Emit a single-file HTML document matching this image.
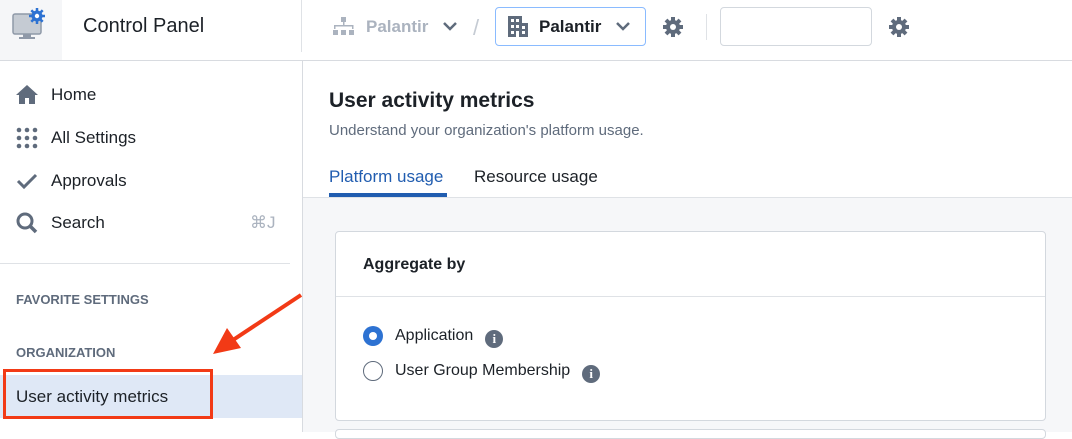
<!DOCTYPE html>
<html><head><style>
*{box-sizing:border-box;margin:0;padding:0}
body{width:1072px;height:432px;overflow:hidden;background:#fff;font-family:"Liberation Sans",sans-serif;color:#1c2127;position:relative}
.a{position:absolute}
.i{display:inline-block;vertical-align:-3px;margin-left:12px;width:18px;height:18px;border-radius:50%;background:#5f6b7c;color:#fff;font-size:13px;font-weight:bold;text-align:center;line-height:18px;font-family:'Liberation Serif',serif}
</style></head><body>
<div class="a" style="left:0;top:0;width:62px;height:60px;background:#f5f6f8"></div>
<svg class="a" style="left:12px;top:8px" width="36" height="34" viewBox="0 0 36 34">
<rect x="1" y="6" width="28" height="20" rx="2" fill="#c5cbd3" stroke="#8f99a8" stroke-width="1.5"/>
<rect x="11" y="26" width="8" height="3" fill="#8f99a8"/><rect x="7" y="29" width="16" height="2" fill="#8f99a8"/>
<g stroke="#2d72d2" stroke-width="2.5"><line x1="25" y1="0" x2="25" y2="16"/><line x1="17" y1="8" x2="33" y2="8"/><line x1="19.3" y1="2.3" x2="30.7" y2="13.7"/><line x1="30.7" y1="2.3" x2="19.3" y2="13.7"/></g>
<circle cx="25" cy="8" r="5.5" fill="#2d72d2"/><circle cx="25" cy="8" r="2.2" fill="#fff"/>
</svg>
<div class="a" style="left:83px;top:15px;font-size:20px">Control Panel</div>
<div class="a" style="left:301px;top:0;width:1px;height:52px;background:#dfe2e6"></div>
<div class="a" style="left:0;top:60px;width:1072px;height:1px;background:#d8dbe0"></div>
<svg class="a" style="left:333px;top:17px" width="22" height="20" viewBox="0 0 22 20"><g fill="#abb3bf"><rect x="8" y="0" width="5" height="5"/><rect x="10" y="5" width="1.5" height="4"/><rect x="1" y="8" width="19" height="1.5"/><rect x="1" y="8" width="1.5" height="4"/><rect x="19" y="8" width="1.5" height="4"/><rect x="0" y="13" width="5" height="5"/><rect x="8" y="13" width="5" height="5"/><rect x="16" y="13" width="5" height="5"/></g></svg>
<div class="a" style="left:366px;top:17px;font-size:17px;color:#abb3bf;font-weight:bold">Palantir</div>
<svg class="a" style="left:442px;top:20px" width="16" height="12"><path d="M2 3l6 6 6-6" stroke="#5f6b7c" stroke-width="2.5" fill="none"/></svg>
<div class="a" style="left:473px;top:15px;font-size:22px;color:#c5cbd3">/</div>
<div class="a" style="left:495px;top:7px;width:151px;height:39px;border:1px solid #8abbff;border-radius:4px"></div>
<svg class="a" style="left:508px;top:16px" width="20" height="21" viewBox="0 0 20 21"><path fill="#5f6b7c" d="M0 0h14v7h6v14H0z"/><g fill="#fff"><rect x="3" y="3" width="3" height="3"/><rect x="8" y="3" width="3" height="3"/><rect x="3" y="9" width="3" height="3"/><rect x="8" y="9" width="3" height="3"/><rect x="14" y="10" width="3" height="3"/><rect x="3" y="15" width="3" height="3"/><rect x="14" y="15" width="3" height="3"/><rect x="8" y="15" width="3" height="6"/></g></svg>
<div class="a" style="left:539px;top:17px;font-size:17px;font-weight:bold">Palantir</div>
<svg class="a" style="left:615px;top:20px" width="16" height="12"><path d="M2 3l6 6 6-6" stroke="#5f6b7c" stroke-width="2.5" fill="none"/></svg>
<svg class="a" style="left:662px;top:16px" width="22" height="22" viewBox="0 0 22 22"><g stroke="#5f6b7c" stroke-width="4"><line x1="11" y1="1" x2="11" y2="21"/><line x1="1" y1="11" x2="21" y2="11"/><line x1="4" y1="4" x2="18" y2="18"/><line x1="18" y1="4" x2="4" y2="18"/></g><circle cx="11" cy="11" r="7" fill="#5f6b7c"/><circle cx="11" cy="11" r="3" fill="#fff"/></svg>
<div class="a" style="left:706px;top:14px;width:1px;height:26px;background:#dfe2e6"></div>
<div class="a" style="left:720px;top:7px;width:152px;height:39px;border:1px solid #d3d8de;border-radius:4px"></div>
<svg class="a" style="left:888px;top:16px" width="22" height="22" viewBox="0 0 22 22"><g stroke="#5f6b7c" stroke-width="4"><line x1="11" y1="1" x2="11" y2="21"/><line x1="1" y1="11" x2="21" y2="11"/><line x1="4" y1="4" x2="18" y2="18"/><line x1="18" y1="4" x2="4" y2="18"/></g><circle cx="11" cy="11" r="7" fill="#5f6b7c"/><circle cx="11" cy="11" r="3" fill="#fff"/></svg>
<div class="a" style="left:302px;top:61px;width:1px;height:371px;background:#d8dbe0"></div>
<svg class="a" style="left:16px;top:84px" width="22" height="20" viewBox="0 0 22 20"><path fill="#5f6b7c" d="M11 1L0 11h3v9h6v-6h4v6h6v-9h3z"/></svg>
<div class="a" style="left:51px;top:85px;font-size:17px">Home</div>
<svg class="a" style="left:16px;top:127px" width="22" height="22"><g fill="#5f6b7c"><circle cx="3" cy="3" r="2.3"/><circle cx="11" cy="3" r="2.3"/><circle cx="19" cy="3" r="2.3"/><circle cx="3" cy="11" r="2.3"/><circle cx="11" cy="11" r="2.3"/><circle cx="19" cy="11" r="2.3"/><circle cx="3" cy="19" r="2.3"/><circle cx="11" cy="19" r="2.3"/><circle cx="19" cy="19" r="2.3"/></g></svg>
<div class="a" style="left:51px;top:128px;font-size:17px">All Settings</div>
<svg class="a" style="left:16px;top:172px" width="22" height="18"><path d="M2 9l6 6L20 3" stroke="#5f6b7c" stroke-width="3" fill="none"/></svg>
<div class="a" style="left:51px;top:171px;font-size:17px">Approvals</div>
<svg class="a" style="left:16px;top:212px" width="22" height="22"><circle cx="9" cy="9" r="7" stroke="#5f6b7c" stroke-width="3" fill="none"/><path d="M14 14l6 6" stroke="#5f6b7c" stroke-width="3.5"/></svg>
<div class="a" style="left:51px;top:213px;font-size:17px">Search</div>
<div class="a" style="left:250px;top:213px;font-size:17px;color:#abb3bf">⌘J</div>
<div class="a" style="left:0;top:263px;width:290px;height:1px;background:#dfe2e6"></div>
<div class="a" style="left:16px;top:292px;font-size:13px;font-weight:bold;color:#5f6b7c">FAVORITE SETTINGS</div>
<div class="a" style="left:16px;top:345px;font-size:13px;font-weight:bold;color:#5f6b7c">ORGANIZATION</div>
<div class="a" style="left:0;top:375px;width:302px;height:43px;background:#dfe8f6"></div>
<div class="a" style="left:3px;top:369px;width:210px;height:50px;border:3px solid #f23a16"></div>
<div class="a" style="left:16px;top:387px;font-size:17px">User activity metrics</div>
<svg class="a" style="left:205px;top:290px" width="100" height="70"><line x1="96" y1="5" x2="25" y2="52" stroke="#f23a16" stroke-width="4"/><path d="M8 64L22 38 36 58z" fill="#f23a16"/></svg>
<div class="a" style="left:329px;top:89px;font-size:21px;font-weight:bold">User activity metrics</div>
<div class="a" style="left:329px;top:122px;font-size:15px;color:#5f6b7c">Understand your organization's platform usage.</div>
<div class="a" style="left:329px;top:167px;font-size:17px;color:#215db0">Platform usage</div>
<div class="a" style="left:329px;top:193px;width:118px;height:4px;background:#215db0"></div>
<div class="a" style="left:474px;top:167px;font-size:17px">Resource usage</div>
<div class="a" style="left:303px;top:197px;width:769px;height:235px;background:#f6f7f9;border-top:1px solid #dfe2e6"></div>
<div class="a" style="left:335px;top:231px;width:711px;height:190px;background:#fff;border:1px solid #d3d8de;border-radius:4px"></div>
<div class="a" style="left:336px;top:296px;width:709px;height:1px;background:#dfe2e6"></div>
<div class="a" style="left:363px;top:256px;font-size:16px;font-weight:bold">Aggregate by</div>
<div class="a" style="left:363px;top:326px;width:20px;height:20px;border-radius:50%;background:#2d72d2"></div>
<div class="a" style="left:369px;top:332px;width:8px;height:8px;border-radius:50%;background:#fff"></div>
<div class="a" style="left:395px;top:327px;font-size:16px">Application<span class="i">i</span></div>
<div class="a" style="left:363px;top:361px;width:20px;height:20px;border-radius:50%;border:1.5px solid #5f6b7c"></div>
<div class="a" style="left:395px;top:362px;font-size:16px">User Group Membership<span class="i">i</span></div>
<div class="a" style="left:335px;top:429px;width:711px;height:10px;background:#fff;border:1px solid #d3d8de;border-radius:4px"></div>
</body></html>
